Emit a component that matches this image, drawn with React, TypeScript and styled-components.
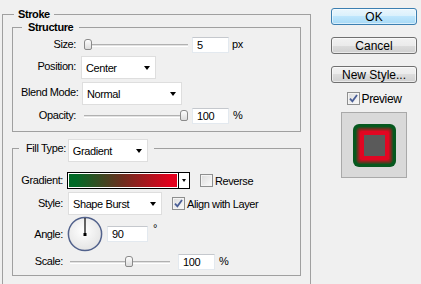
import React from 'react';
import styled, { createGlobalStyle } from 'styled-components';

const GlobalStyle = createGlobalStyle`
  html, body {
    margin: 0;
    padding: 0;
    background: #f0f0f0;
    overflow: hidden;
  }
  body {
    font-family: "Liberation Sans", Arial, sans-serif;
    font-size: 11px;
    letter-spacing: -0.4px;
    color: #000;
  }
`;

const Dialog = styled.div`
  display: flex;
  align-items: flex-start;
  width: 421px;
  height: 284px;
  padding-left: 2px;
  box-sizing: border-box;
  overflow: hidden;
`;

// etched group frame; its title is pulled up over the top border
const Group = styled.section<{ $mt: number }>`
  display: flex;
  flex-direction: column;
  margin-top: ${(p) => p.$mt}px;
  border: 1px solid #a0a0a0;
  box-sizing: border-box;
`;

const OuterGroup = styled(Group)`
  width: 309px;
  padding: 0 9px 40px;
`;

const StructureGroup = styled(Group)`
  padding: 0 8px 7px;
  gap: 3px;
`;

const FillGroup = styled(Group)`
  padding: 0 8px 5px;
`;

const Title = styled.div<{ $lh: number; $mt: number; $ml: number; $pad: number }>`
  align-self: flex-start;
  line-height: ${(p) => p.$lh}px;
  margin: ${(p) => p.$mt}px 0 0 ${(p) => p.$ml}px;
  padding: 0 ${(p) => p.$pad}px;
  background: #f0f0f0;
  font-weight: bold;
`;

const FillTitle = styled.div`
  align-self: flex-start;
  display: flex;
  align-items: flex-start;
  margin: -10px 0 0 -2px;
  padding: 0 6px 0 7px;
  background: #f0f0f0;
`;

const TitleText = styled.span`
  line-height: 18px;
  margin-right: 2px;
`;

const Row = styled.div<{ $h: number; $mt?: number }>`
  display: flex;
  align-items: center;
  height: ${(p) => p.$h}px;
  margin-top: ${(p) => p.$mt ?? 0}px;
`;

const Label = styled.span<{ $w: number; $gap: number; $lift?: number }>`
  width: ${(p) => p.$w}px;
  margin-right: ${(p) => p.$gap}px;
  margin-top: ${(p) => -(p.$lift ?? 1) * 2}px;
  flex-shrink: 0;
  text-align: right;
  white-space: nowrap;
`;

const Unit = styled.span<{ $ml: number; $top?: boolean }>`
  margin-left: ${(p) => p.$ml}px;
  align-self: ${(p) => (p.$top ? 'flex-start' : 'center')};
  margin-top: ${(p) => (p.$top ? '7px' : '-2px')};
  line-height: ${(p) => (p.$top ? 1 : 'normal')};
`;

const Track = styled.div<{ $w: number; $ml: number }>`
  position: relative;
  flex-shrink: 0;
  width: ${(p) => p.$w}px;
  height: 12px;
  margin-left: ${(p) => p.$ml}px;

  &::before {
    content: '';
    position: absolute;
    left: 0;
    right: 0;
    top: 5px;
    height: 1px;
    background: #e2e2e2;
    border-top: 1px solid #b1b1b1;
    border-bottom: 1px solid #ffffff;
  }
`;

const Thumb = styled.span`
  position: absolute;
  top: 0;
  width: 8px;
  height: 11px;
  box-sizing: border-box;
  border: 1px solid #8a8a8a;
  border-radius: 3px 3px 2px 2px;
  background: linear-gradient(#fdfdfd, #dcdcdc);
`;

const NumberBox = styled.div<{ $w: number; $ml: number }>`
  width: ${(p) => p.$w}px;
  height: 16px;
  margin-left: ${(p) => p.$ml}px;
  padding-left: 4px;
  box-sizing: border-box;
  flex-shrink: 0;
  display: flex;
  align-items: center;
  background: #fff;
  border: 1px solid #e3e9ef;
  border-top-color: #c5c8cd;
`;

const Select = styled.div<{ $w: number; $ml?: number }>`
  width: ${(p) => p.$w}px;
  height: 23px;
  margin-left: ${(p) => p.$ml ?? 0}px;
  padding: 0 5px 0 4px;
  box-sizing: border-box;
  flex-shrink: 0;
  display: flex;
  align-items: center;
  justify-content: space-between;
  background: #fff;
  border: 1px solid #dedede;
`;

const Caret = styled.span<{ $size?: number }>`
  width: 0;
  height: 0;
  border-left: ${(p) => (p.$size ?? 7) / 2}px solid transparent;
  border-right: ${(p) => (p.$size ?? 7) / 2}px solid transparent;
  border-top: ${(p) => Math.ceil((p.$size ?? 7) / 2)}px solid #000;
`;

const Swatch = styled.div`
  display: flex;
  width: 123px;
  height: 17px;
  box-sizing: border-box;
  border: 1px solid #000;
  flex-shrink: 0;
`;

const SwatchFill = styled.div`
  flex: 1;
  border: 1px solid #fff;
  background: linear-gradient(to right, #006a26 6%, #6e2d1e 50%, #e3001d 94%);
`;

const SwatchButton = styled.div`
  width: 10px;
  border-left: 1px solid #000;
  background: #fff;
  display: flex;
  align-items: center;
  justify-content: center;
`;

const CheckRow = styled.label<{ $ml: number; $size?: number }>`
  display: flex;
  align-items: center;
  gap: 2px;
  height: 13px;
  margin-left: ${(p) => p.$ml}px;
  font-size: ${(p) => p.$size ?? 11}px;
  white-space: nowrap;
`;

const Box = styled.span`
  width: 13px;
  height: 13px;
  box-sizing: border-box;
  flex-shrink: 0;
  border: 1px solid #8e8f8f;
  background: linear-gradient(135deg, #dcdcdc, #fbfbfb);
  box-shadow: inset 0 0 0 1px #f4f4f4;
  display: flex;
  align-items: center;
  justify-content: center;
`;

const Side = styled.div`
  width: 86px;
  margin-left: 20px;
  padding-top: 8px;
  display: flex;
  flex-direction: column;
  align-items: center;
`;

const Button = styled.div<{ $primary?: boolean; $mb?: number }>`
  width: 86px;
  height: 17px;
  box-sizing: border-box;
  margin-bottom: ${(p) => p.$mb ?? 12}px;
  border: 1px solid ${(p) => (p.$primary ? '#3c7fb1' : '#707070')};
  border-radius: 3px;
  background: ${(p) =>
    p.$primary
      ? 'linear-gradient(#eaf6fd, #d9f0fc 50%, #bee6fd 50%, #a7d9f5)'
      : 'linear-gradient(#f2f2f2, #ebebeb 50%, #dddddd 50%, #cfcfcf)'};
  box-shadow: inset 0 0 0 1px rgba(255, 255, 255, 0.55);
  font-size: 12px;
  letter-spacing: 0;
  display: flex;
  align-items: center;
  justify-content: center;
`;

const PreviewBox = styled.div`
  width: 66px;
  height: 66px;
  margin-top: 7px;
  box-sizing: border-box;
  border: 1px solid #a9a9a9;
  background: #d9d9d9;
  display: flex;
  align-items: center;
  justify-content: center;
`;

const Check = () => (
  <svg width="9" height="9" viewBox="0 0 9 9">
    <path d="M1 4.6 L3.4 7.4 L8 1" fill="none" stroke="#4a5e96" strokeWidth="1.8" />
  </svg>
);

const CheckBox = ({ checked }: { checked?: boolean }) => <Box>{checked && <Check />}</Box>;

const Slider = ({ width, at, ml }: { width: number; at: number; ml: number }) => (
  <Track $w={width} $ml={ml}>
    <Thumb style={{ left: Math.round(at * (width - 8)) }} />
  </Track>
);

const Dial = ({ angle }: { angle: number }) => {
  const r = (angle * Math.PI) / 180;
  return (
    <svg width="36" height="36" viewBox="0 0 36 36">
      <defs>
        <radialGradient id="dialFill" cx="45%" cy="40%" r="65%">
          <stop offset="0" stopColor="#ffffff" />
          <stop offset="1" stopColor="#e2e2e2" />
        </radialGradient>
      </defs>
      <circle cx="18" cy="18" r="16.6" fill="url(#dialFill)" stroke="#52628c" strokeWidth="1.5" />
      <line x1="18" y1="18.5" x2={18 + Math.cos(r) * 16} y2={18.5 - Math.sin(r) * 16.5} stroke="#000" strokeWidth="1.2" />
      <rect x="16.5" y="17" width="3" height="3" fill="#000" />
    </svg>
  );
};

const mix = (a: number[], b: number[], t: number) =>
  `rgb(${a.map((v, i) => Math.round(v + (b[i] - v) * t)).join(',')})`;

const ShapeBurst = () => {
  const green = [6, 88, 30];
  const red = [226, 6, 34];
  const rings = [];
  for (let i = 0; i < 11; i++) {
    const t = Math.min(1, Math.max(0, (i - 2) / 5));
    const s = 43 - i * 2;
    rings.push(
      <rect key={i} x={i} y={i} width={s} height={s} rx={Math.max(0, 6 - i * 0.6)} fill={mix(green, red, t)} />
    );
  }
  return (
    <svg width="43" height="43" viewBox="0 0 43 43">
      {rings}
      <rect x="11" y="11" width="21" height="21" fill="#5a5a5a" />
    </svg>
  );
};

export default function App() {
  return (
    <>
      <GlobalStyle />
      <Dialog>
        <OuterGroup $mt={14}>
          <Title $lh={13} $mt={-7} $ml={2} $pad={4}>
            Stroke
          </Title>

          <StructureGroup $mt={6}>
            <Title $lh={14} $mt={-8} $ml={1} $pad={6}>
              Structure
            </Title>
            <Row $h={16}>
              <Label $w={55} $gap={5}>Size:</Label>
              <Slider width={104} at={0} ml={3} />
              <NumberBox $w={37} $ml={4}>5</NumberBox>
              <Unit $ml={3}>px</Unit>
            </Row>
            <Row $h={23}>
              <Label $w={55} $gap={5} $lift={1.5}>Position:</Label>
              <Select $w={75}>
                Center
                <Caret />
              </Select>
            </Row>
            <Row $h={23}>
              <Label $w={55} $gap={5} $lift={1.5}>Blend Mode:</Label>
              <Select $w={100} $ml={1}>
                Normal
                <Caret />
              </Select>
            </Row>
            <Row $h={16}>
              <Label $w={55} $gap={5}>Opacity:</Label>
              <Slider width={104} at={1} ml={3} />
              <NumberBox $w={37} $ml={4}>100</NumberBox>
              <Unit $ml={4}>%</Unit>
            </Row>
          </StructureGroup>

          <FillGroup $mt={16}>
            <FillTitle>
              <TitleText>Fill Type:</TitleText>
              <Select $w={80}>
                Gradient
                <Caret />
              </Select>
            </FillTitle>
            <Row $h={17} $mt={10}>
              <Label $w={42} $gap={4}>Gradient:</Label>
              <Swatch>
                <SwatchFill />
                <SwatchButton>
                  <Caret $size={5} />
                </SwatchButton>
              </Swatch>
              <CheckRow $ml={10}>
                <CheckBox />
                Reverse
              </CheckRow>
            </Row>
            <Row $h={23} $mt={3}>
              <Label $w={42} $gap={4} $lift={1}>Style:</Label>
              <Select $w={94} $ml={1}>
                Shape Burst
                <Caret />
              </Select>
              <CheckRow $ml={10}>
                <CheckBox checked />
                Align with Layer
              </CheckRow>
            </Row>
            <Row $h={36} $mt={1}>
              <Label $w={42} $gap={4} $lift={0}>Angle:</Label>
              <Dial angle={90} />
              <NumberBox $w={41} $ml={4}>90</NumberBox>
              <Unit $ml={5} $top>°</Unit>
            </Row>
            <Row $h={16} $mt={2}>
              <Label $w={42} $gap={4}>Scale:</Label>
              <Slider width={100} at={0.6} ml={3} />
              <NumberBox $w={37} $ml={8}>100</NumberBox>
              <Unit $ml={4}>%</Unit>
            </Row>
          </FillGroup>
        </OuterGroup>

        <Side>
          <Button $primary>OK</Button>
          <Button>Cancel</Button>
          <Button $mb={9}>New Style...</Button>
          <CheckRow $ml={0} $size={12}>
            <CheckBox checked />
            Preview
          </CheckRow>
          <PreviewBox>
            <ShapeBurst />
          </PreviewBox>
        </Side>
      </Dialog>
    </>
  );
}
